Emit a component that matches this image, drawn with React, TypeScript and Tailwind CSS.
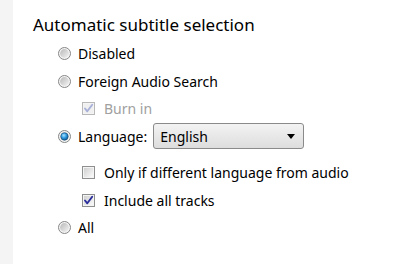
import React from "react";

const font = { fontFamily: '"Segoe UI", "Noto Sans", "Open Sans", Arial, sans-serif' };

function Radio({ checked }: { checked?: boolean }) {
  return (
    <svg width="13" height="13" viewBox="0 0 13 13" className="shrink-0">
      <defs>
        <linearGradient id="rg" x1="0" y1="0" x2="1" y2="1">
          <stop offset="0" stopColor="#b8b8b8" />
          <stop offset="1" stopColor="#f4f4f4" />
        </linearGradient>
        <radialGradient id="rb" cx="0.4" cy="0.35" r="0.7">
          <stop offset="0" stopColor="#a7e2ff" />
          <stop offset="0.5" stopColor="#2f9ae0" />
          <stop offset="1" stopColor="#0c4f86" />
        </radialGradient>
      </defs>
      <circle cx="6.5" cy="6.5" r="6" fill="#f4f4f4" stroke="#858686" strokeWidth="1" />
      <circle cx="6.5" cy="6.5" r="4.4" fill="url(#rg)" />
      {checked && <circle cx="6.5" cy="6.5" r="3.7" fill="url(#rb)" stroke="#1a4f7a" strokeWidth="0.6" />}
    </svg>
  );
}

function Check({ checked, disabled }: { checked?: boolean; disabled?: boolean }) {
  return (
    <svg width="13" height="13" viewBox="0 0 13 13" className="shrink-0">
      <defs>
        <linearGradient id="cg" x1="0" y1="0" x2="1" y2="1">
          <stop offset="0" stopColor="#d0d0d0" />
          <stop offset="1" stopColor="#fafafa" />
        </linearGradient>
      </defs>
      <rect x="0.5" y="0.5" width="12" height="12" fill="#f4f4f4" stroke={disabled ? "#b8b8b8" : "#8e8f8f"} />
      <rect x="2" y="2" width="9" height="9" fill={disabled ? "#f0f0f0" : "url(#cg)"} />
      {checked && (
        <path
          d="M3 6.5 L5.3 9.3 L10.2 2.8"
          fill="none"
          stroke={disabled ? "#a8b0d8" : "#2b2f9c"}
          strokeWidth="1.9"
          strokeLinecap="round"
          strokeLinejoin="round"
        />
      )}
    </svg>
  );
}

export default function App() {
  return (
    <div className="flex w-[394px] h-[264px] bg-white text-black" style={font}>
      <div className="w-[13px] h-full bg-[#f4f4f4]" />
      <div className="flex flex-col pl-[20px] pt-[11px]">
        <div className="h-[28px] flex items-center text-[17px]">Automatic subtitle selection</div>
        <div className="pl-[25px] flex flex-col text-[14px]">
          <div className="h-[28px] flex items-center gap-[7px]">
            <Radio />
            <span>Disabled</span>
          </div>
          <div className="h-[28px] flex items-center gap-[7px]">
            <Radio />
            <span>Foreign Audio Search</span>
          </div>
          <div className="h-[27px] flex items-center gap-[9px] pl-[24px] text-[#a0a0a0]">
            <Check checked disabled />
            <span>Burn in</span>
          </div>
          <div className="h-[28px] flex items-center gap-[7px]">
            <Radio checked />
            <span>Language:</span>
            <div className="-ml-[1px] w-[151px] h-[26px] rounded-[3px] border border-[#8a8a8a] bg-gradient-to-b from-[#f3f3f3] to-[#dddddd] flex items-center justify-between pl-[6px] pr-[8px]">
              <span>English</span>
              <svg width="8" height="5" viewBox="0 0 8 5">
                <path d="M0 0 H8 L4 5 Z" fill="#000" />
              </svg>
            </div>
          </div>
          <div className="mt-[8px] h-[28px] flex items-center gap-[9px] pl-[24px]">
            <Check />
            <span>Only if different language from audio</span>
          </div>
          <div className="h-[28px] flex items-center gap-[9px] pl-[24px]">
            <Check checked />
            <span>Include all tracks</span>
          </div>
          <div className="h-[27px] flex items-center gap-[7px]">
            <Radio />
            <span>All</span>
          </div>
        </div>
      </div>
    </div>
  );
}
